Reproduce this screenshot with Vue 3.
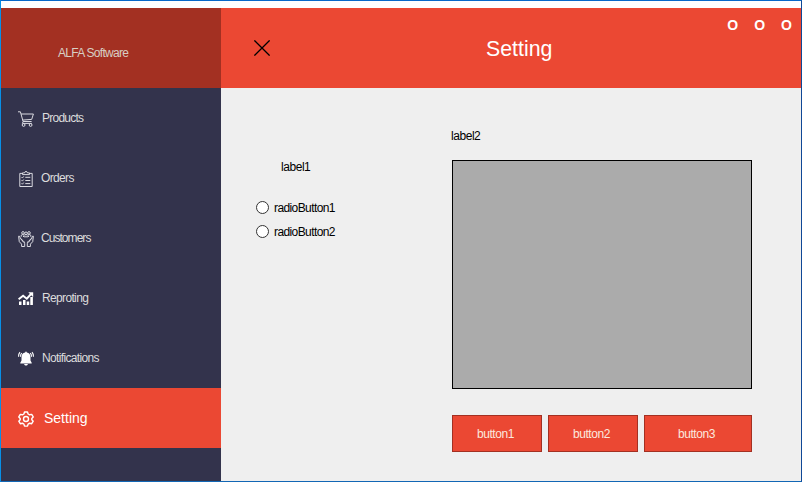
<script setup>
import { ref } from 'vue'

const items = [
  { id: 'products', label: 'Products' },
  { id: 'orders', label: 'Orders' },
  { id: 'customers', label: 'Customers' },
  { id: 'reporting', label: 'Reproting' },
  { id: 'notifications', label: 'Notifications' },
  { id: 'setting', label: 'Setting' },
]
const active = ref('setting')
const choice = ref('')
const options = ['radioButton1', 'radioButton2']
const buttons = ['button1', 'button2', 'button3']
</script>

<template>
  <div class="window">
    <div class="strip"></div>
    <div class="body">
      <aside class="sidebar">
        <div class="brand"><span>ALFA Software</span></div>
        <nav>
          <a
            v-for="item in items"
            :key="item.id"
            class="item"
            :class="[item.id, { active: active === item.id }]"
            @click="active = item.id"
          >
            <svg class="icon" viewBox="0 0 16 16" width="16" height="16">
              <g v-if="item.id === 'products'" class="line">
                <path d="M0 .8h2.400l2.700 9.700h8.500M3 3h12.400l-1.700 5.400-9.200.7M5.200 10.500l-.8 1.900h9.400" />
                <circle cx="5.600" cy="14" r="1.400" />
                <circle cx="12.600" cy="14" r="1.400" />
              </g>
              <g v-else-if="item.id === 'orders'" class="line">
                <path d="M4.500 2.400H1.800v13.100h12.400V2.400h-2.700M4.500 3.600V1.900h2C6.600 0 9.400 0 9.500 1.900h2v1.700z" />
                <path d="M3.600 6.200l.8.8 1.300-1.600M7.300 6.300h5M3.600 9.300l.8.8 1.300-1.600M7.300 9.500h5M3.600 12.400l.8.8 1.300-1.600M7.300 12.600h5" />
              </g>
              <g v-else-if="item.id === 'customers'" class="line">
                <circle cx="5" cy="1.900" r="1.300" />
                <circle cx="8" cy="2.300" r="1.300" />
                <circle cx="11" cy="1.900" r="1.300" />
                <path d="M3.200 5.800V4.200Q5 2.900 6.300 4.100 8 3 9.700 4.100 11 2.900 12.800 4.200v1.600M5.500 6V4.700M10.500 6V4.700M6 5.800h4" />
                <path d="M.6 5.200Q1.400 4.600 1.900 6l.6 2 2.700 1.800q1.800 1.200 1.500 3v2.700H3.600v-2.400L1.300 10.700zM15.400 5.200q-.8-.6-1.300.8l-.6 2-2.700 1.800q-1.800 1.200-1.500 3v2.700h3.100v-2.400l2.300-2.400zM3 7.500l2.500 4M13 7.500l-2.500 4" />
              </g>
              <g v-else-if="item.id === 'reporting'">
                <path class="solid" d="M1 10.500h2.500V14H1zM5 9h2.500v5H5zM8.700 10.500h2.500V14H8.700zM12.300 6h2.600v8h-2.600z" />
                <path class="trend" d="M.6 8.200l4.500-3.500 3.700 3 4.500-4.900" />
                <path class="solid" d="M10.300 1.300h4.900v4.900z" />
              </g>
              <g v-else-if="item.id === 'notifications'">
                <path class="solid" d="M7.200 1.600C7.200.1 8.800.1 8.800 1.600c2.500.5 3.700 2.300 3.700 4.500v3.400l1.200 2.200v.8H2.300v-.8l1.200-2.200V6.100c0-2.200 1.200-4 3.700-4.500zM6.100 13.100h3.800c-.5 2-3.300 2-3.800 0z" />
                <path class="rings" d="M2 1.200Q.5 2.900.6 5.700M3.800 2.100Q2.400 3.400 2.500 5.700M14 1.200q1.500 1.700 1.400 4.500M12.200 2.100q1.400 1.300 1.300 3.600" />
              </g>
              <g v-else class="gear">
                <path d="M6.500 1h3l.6 2 1.500.8 2.100-.4 1.500 2.500L13.800 7.400v1.300l1.400 1.500-1.500 2.500-2.100-.5-1.500.9-.6 2h-3l-.6-2-1.500-.9-2.100.5L.8 10.200l1.400-1.500V7.400L.8 5.900l1.500-2.500 2.100.4L5.900 3z" />
                <circle cx="8" cy="8" r="2.500" />
              </g>
            </svg>
            <span class="text">{{ item.label }}</span>
          </a>
        </nav>
      </aside>

      <main class="main">
        <header class="header">
          <svg class="close" viewBox="0 0 16 16" width="16" height="16">
            <path d="M.4.400l15.200 15.200M15.600.400L.4 15.600" />
          </svg>
          <h1>Setting</h1>
          <div class="controls"><span v-for="n in 3" :key="n">O</span></div>
        </header>
        <div class="content">
          <section class="choices">
            <div class="label">label1</div>
            <label v-for="option in options" :key="option" class="radio">
              <input v-model="choice" type="radio" :value="option" />
              <span>{{ option }}</span>
            </label>
          </section>
          <section class="data">
            <div class="label">label2</div>
            <div class="grid"></div>
            <div class="buttons">
              <button v-for="b in buttons" :key="b"><span>{{ b }}</span></button>
            </div>
          </section>
        </div>
      </main>
    </div>
  </div>
</template>

<style>
body {
  margin: 0;
  overflow: hidden;
}
</style>

<style scoped>
.window {
  box-sizing: border-box;
  width: 802px;
  height: 482px;
  display: flex;
  flex-direction: column;
  border: 1px solid;
  border-color: #0868c8 #104896 #1267b5 #078fe8;
  background: #efefef;
  font: 12px/16px "Liberation Sans", Arial, sans-serif;
}
.strip {
  height: 7px;
  flex: none;
  background: #fff;
}
.body {
  flex: 1;
  display: flex;
}
.sidebar {
  width: 220px;
  background: #33334c;
}
.brand {
  box-sizing: border-box;
  height: 80px;
  padding: 37px 0 0 57px;
  background: #a33022;
  color: #d8cfc4;
  letter-spacing: -0.7px;
  white-space: nowrap;
}
.item {
  box-sizing: border-box;
  height: 60px;
  display: flex;
  align-items: center;
  padding-left: 17px;
  gap: 8px;
  color: #dcdcdc;
  letter-spacing: -0.65px;
}
.products {
  letter-spacing: -0.75px;
}
.customers {
  letter-spacing: -0.95px;
}
.orders .text,
.customers .text {
  margin-left: -1px;
}
.item.active {
  background: #eb4833;
  color: #fff;
  font-size: 14px;
  letter-spacing: 0;
  gap: 10px;
}
.icon {
  display: block;
  margin-top: 2px;
  flex: none;
}
.line {
  fill: none;
  stroke: #d9d9e0;
  stroke-width: 1;
}
.solid {
  fill: #fff;
}
.rings {
  fill: none;
  stroke: #fff;
  stroke-width: 1.1;
}
.trend {
  fill: none;
  stroke: #fff;
  stroke-width: 2;
}
.gear {
  fill: none;
  stroke: #fff;
  stroke-width: 1.4;
  stroke-linejoin: round;
}
.main {
  flex: 1;
}
.header {
  box-sizing: border-box;
  height: 80px;
  display: grid;
  grid-template-columns: 232px 1fr auto;
  padding: 0 9px 0 33px;
  background: #eb4833;
  color: #fff;
}
.close {
  margin-top: 32px;
  fill: none;
  stroke: #000;
  stroke-width: 1.3;
}
h1 {
  margin: 29px 0 0;
  font-size: 21.333px;
  line-height: 24px;
  font-weight: 400;
}
.controls {
  display: flex;
  gap: 16px;
  padding-top: 9px;
  font-size: 14px;
  font-weight: 700;
}
.content {
  display: flex;
  color: #000;
}
.label {
  letter-spacing: -0.45px;
}
.choices {
  width: 196px;
  padding: 71px 0 0 34px;
}
.choices .label {
  padding-left: 26px;
  margin-bottom: 25px;
}
.radio {
  display: flex;
  align-items: flex-start;
  gap: 5px;
  height: 16px;
  margin-bottom: 8px;
  letter-spacing: -0.6px;
}
.radio input {
  appearance: none;
  box-sizing: border-box;
  width: 13px;
  height: 13px;
  margin: 1px 0 0 1px;
  border: 1px solid #333;
  border-radius: 50%;
  background: #fff;
}
.data {
  width: 301px;
  padding-top: 40px;
}
.grid {
  box-sizing: border-box;
  width: 300px;
  height: 229px;
  margin: 16px 0 26px 1px;
  border: 1px solid #000;
  background: #ababab;
}
.buttons {
  display: grid;
  grid-template-columns: 90px 90px 108px;
  gap: 6px;
  margin-left: 1px;
}
button {
  height: 37px;
  padding: 0 3px 0 0;
  border: 1px solid #a33022;
  background: #eb4833;
  color: #fbe8df;
  font: inherit;
  letter-spacing: -0.4px;
}
</style>
